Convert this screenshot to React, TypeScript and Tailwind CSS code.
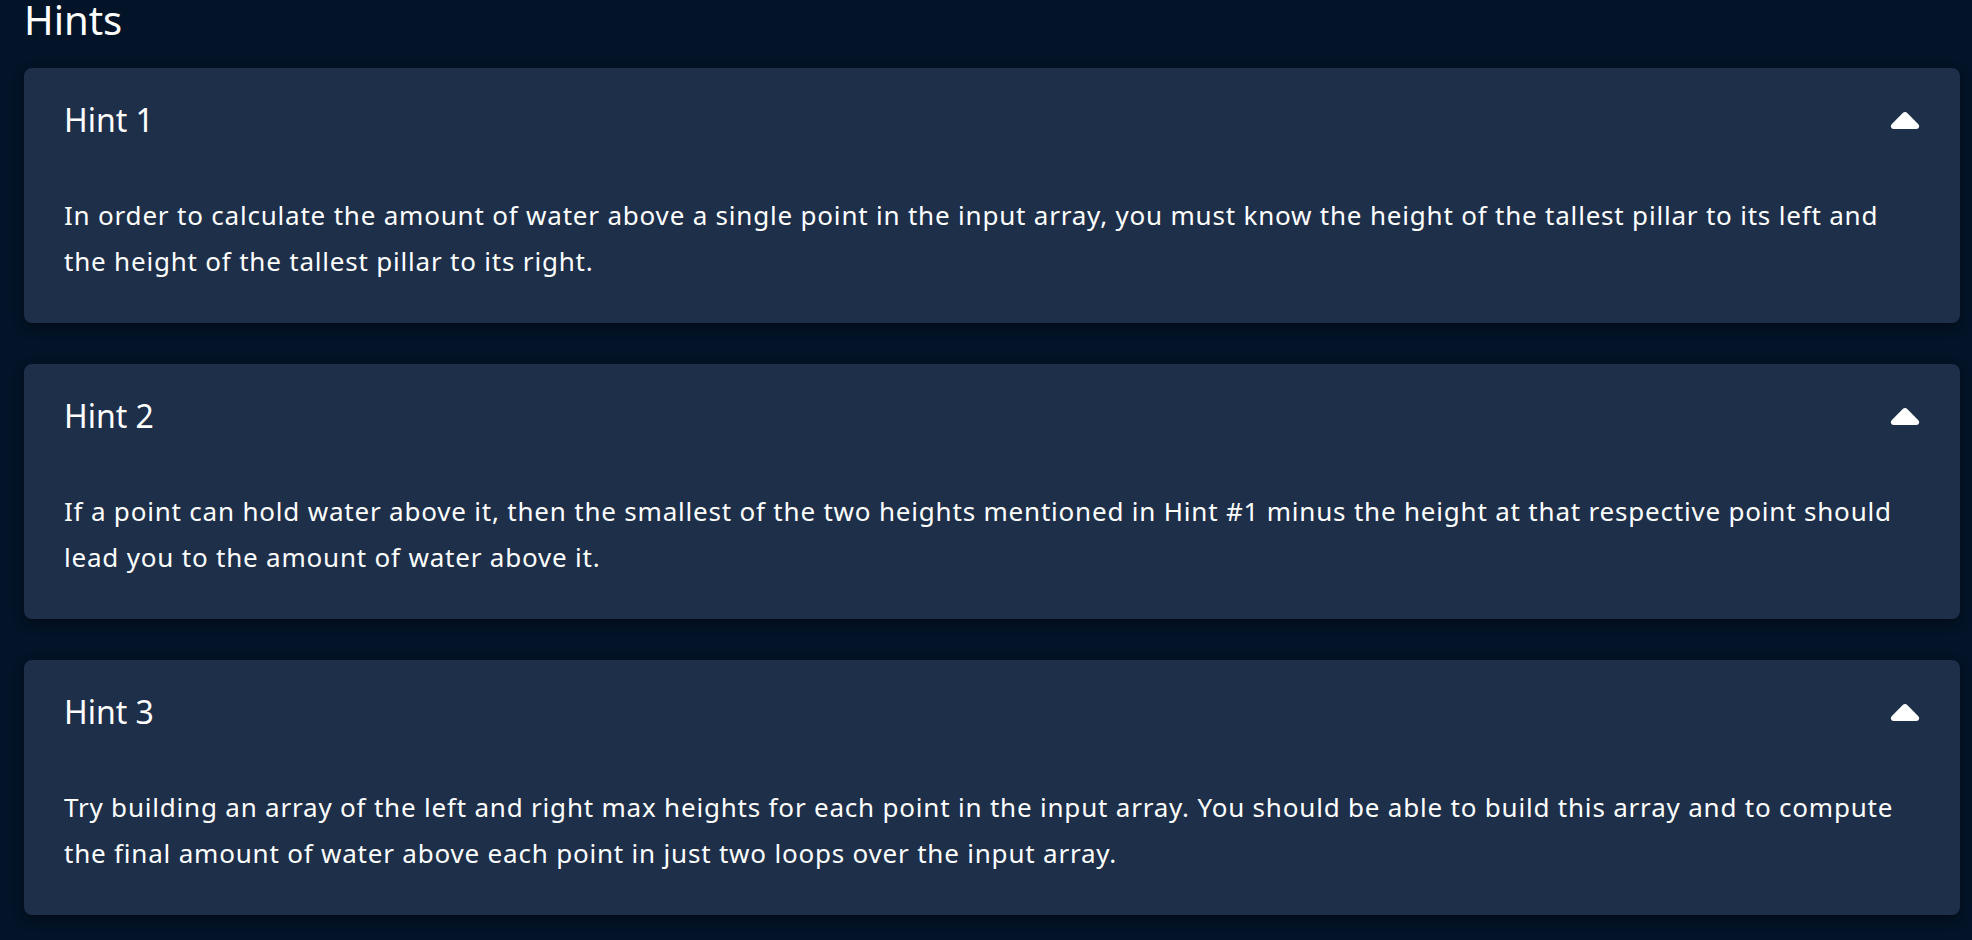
const hints = [
  {
    title: 'Hint 1',
    body: 'In order to calculate the amount of water above a single point in the input array, you must know the height of the tallest pillar to its left and the height of the tallest pillar to its right.',
  },
  {
    title: 'Hint 2',
    body: 'If a point can hold water above it, then the smallest of the two heights mentioned in Hint #1 minus the height at that respective point should lead you to the amount of water above it.',
  },
  {
    title: 'Hint 3',
    body: 'Try building an array of the left and right max heights for each point in the input array. You should be able to build this array and to compute the final amount of water above each point in just two loops over the input array.',
  },
];

function CaretUp() {
  return (
    <svg width="30" height="17" viewBox="0 128 320 192" fill="currentColor" aria-hidden="true">
      <path d="M182.6 137.4c-12.5-12.5-32.8-12.5-45.3 0l-128 128c-9.2 9.2-11.9 22.9-6.9 34.9s16.6 19.8 29.6 19.8H288c12.9 0 24.6-7.8 29.6-19.8s2.2-25.7-6.9-34.9l-128-128z" />
    </svg>
  );
}

function HintCard({ title, body }: { title: string; body: string }) {
  return (
    <div className="rounded-lg bg-[#1e2f4a] px-10 pb-[39px] shadow-[0_4px_12px_rgba(0,0,0,0.45)]">
      {/* header row */}
      <div className="flex h-[104px] items-center justify-between">
        <h3 className="text-[32px] leading-none font-normal text-white">{title}</h3>
        <span className="text-white">
          <CaretUp />
        </span>
      </div>
      <p className="mt-5 text-[26px] leading-[46px] tracking-[0.8px] text-white">{body}</p>
    </div>
  );
}

export default function App() {
  return (
    <div className="min-h-screen bg-[#031428] pt-px font-['Noto_Sans',sans-serif]">
      <div className="pl-6 pr-3">
        <h2 className="-mt-px h-10 text-[40px] leading-[40px] font-normal text-white">Hints</h2>
        <div className="mt-7 flex flex-col gap-[41px]">
          {hints.map((h) => (
            <HintCard key={h.title} title={h.title} body={h.body} />
          ))}
        </div>
      </div>
    </div>
  );
}
